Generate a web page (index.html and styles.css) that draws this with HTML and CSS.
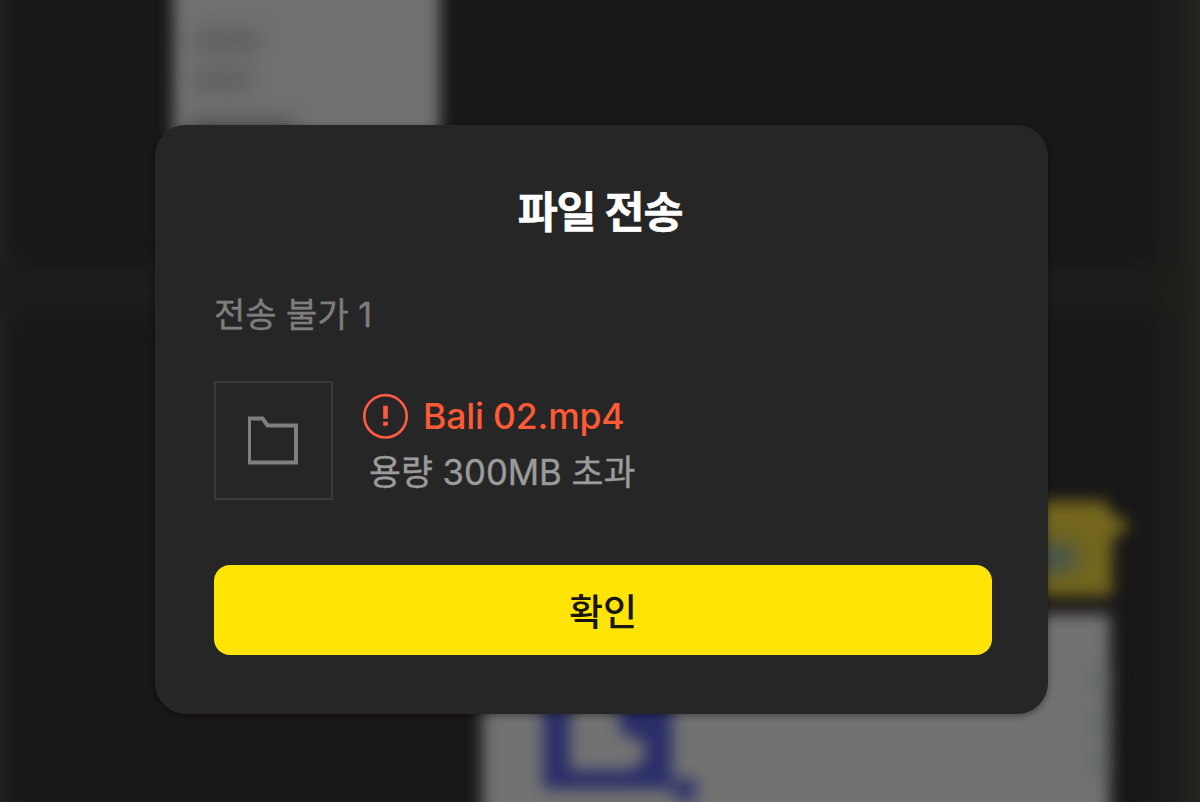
FILE: index.html
```html
<!DOCTYPE html>
<html lang="ko">
<head>
    <meta charset="UTF-8">
    <meta name="viewport" content="width=device-width, initial-scale=1.0">
    <title>파일 전송</title>
    <link rel="stylesheet" href="styles.css">
</head>
<body>
    <svg class="backdrop" viewBox="0 0 1200 802" aria-hidden="true">
        <defs>
            <filter id="soft" x="-20%" y="-20%" width="140%" height="140%" color-interpolation-filters="sRGB">
                <feGaussianBlur stdDeviation="7.5"/>
            </filter>
            <filter id="softer" x="-50%" y="-50%" width="200%" height="200%" color-interpolation-filters="sRGB">
                <feGaussianBlur stdDeviation="11"/>
            </filter>
        </defs>
        <g filter="url(#softer)">
            <rect x="-40" y="-40" width="48" height="880" fill="#222322"/>
            <rect x="-40" y="265" width="1198" height="48" fill="#1c1d1c"/>
            <rect x="1157" y="-40" width="38" height="880" fill="#1e1e1b"/>
            <rect x="1193" y="-40" width="50" height="880" fill="#252624"/>
        </g>
        <g filter="url(#soft)">
            <rect x="173" y="-40" width="267" height="240" fill="#717171"/>
            <path d="M1000 501H1106L1112 515L1132 524L1112 540V596H1000Z" fill="#74671d"/>
            <rect x="482" y="614" width="628" height="240" fill="#727272"/>
            <path d="M543 690H570V770H630L645 760V742L622 734L614 690H672V789H543Z" fill="#2a2e68"/>
            <path d="M664 778H697V802H678Z" fill="#35396a"/>
        </g>
        <g filter="url(#softer)">
            <rect x="194" y="32" width="66" height="18" fill="#5c595a"/>
            <rect x="194" y="72" width="58" height="17" fill="#5c595a"/>
            <rect x="190" y="122" width="105" height="14" fill="#434242"/>
            <rect x="1035" y="544" width="40" height="28" fill="#425354"/>
            <rect x="1094" y="672" width="12" height="18" fill="#4b5a5d"/>
            <rect x="1094" y="715" width="12" height="16" fill="#4b5a5d"/>
            <rect x="1094" y="755" width="12" height="16" fill="#4b5a5d"/>
        </g>
    </svg>

    <main class="dialog" role="dialog" aria-labelledby="title">
        <h1 class="dialog-title" id="title">파일 전송</h1>
        <p class="summary">전송 불가 1</p>
        <div class="file">
            <div class="thumb">
                <svg width="52" height="50" viewBox="0 0 52 50" fill="none" stroke="#7f7f7f" stroke-width="4">
                    <path d="M1 2.5H14.5L19.5 9.5H48V46.5H1Z"/>
                </svg>
            </div>
            <div class="file-info">
                <div class="file-name">
                    <svg width="46" height="46" viewBox="0 0 46 46" fill="none" stroke="#ff5a45">
                        <circle cx="22.5" cy="23.3" r="21.2" stroke-width="2.6"/>
                        <path d="M22.5 12.8V25.8M22.5 28.8V32.8" stroke-width="4.6"/>
                    </svg>
                    <span>Bali 02.mp4</span>
                </div>
                <p class="reason">용량 300MB 초과</p>
            </div>
        </div>
        <button class="confirm" type="button">확인</button>
    </main>
</body>
</html>
```
FILE: styles.css
```css
body {
    margin: 0;
    height: 802px;
    overflow: hidden;
    background-color: #191718;
    color: #fff;
    font-family: Inter, "Noto Sans CJK KR", sans-serif;
}
.backdrop {
    position: absolute;
    top: 0;
    left: 0;
    width: 1200px;
    height: 802px;
}
.dialog {
    position: relative;
    box-sizing: border-box;
    width: 893px;
    height: 589px;
    margin: 125px 0 0 155px;
    padding: 58px 56px 59px 59px;
    border-radius: 31px;
    background-color: #262626;
    box-shadow: 0 2px 7px rgba(0, 0, 0, 0.4);
    display: flex;
    flex-direction: column;
}
.dialog-title {
    margin: 0;
    padding-right: 6px;
    font-size: 43.6px;
    line-height: 60px;
    font-weight: 700;
    letter-spacing: -1.2px;
    text-align: center;
    -webkit-text-stroke: 0.5px #fff;
}
.summary {
    margin: 47px 0 0;
    font-size: 34px;
    line-height: 50px;
    color: #7d7d7d;
    -webkit-text-stroke: 0.4px #7d7d7d;
}
.file {
    display: flex;
    gap: 30px;
    margin-top: 41px;
}
.thumb {
    box-sizing: border-box;
    width: 119px;
    height: 119px;
    border: 2px solid #3a3a3a;
    display: flex;
    align-items: center;
    justify-content: center;
}
.file-info {
    padding-top: 12px;
}
.file-name {
    display: flex;
    align-items: center;
    gap: 14px;
    height: 46px;
    font-size: 35.5px;
    font-weight: 500;
    letter-spacing: -0.15px;
    color: #ff5a36;
}
.reason {
    margin: 8px 0 0 6px;
    font-size: 34.7px;
    line-height: 50px;
    color: #9b9b9b;
    -webkit-text-stroke: 0.4px #9b9b9b;
}
.confirm {
    height: 90px;
    margin: auto 0 0;
    padding: 0;
    border: 0;
    border-radius: 16px;
    background-color: #ffe406;
    color: #17170f;
    font: inherit;
    font-size: 37px;
    font-weight: 500;
}
```
